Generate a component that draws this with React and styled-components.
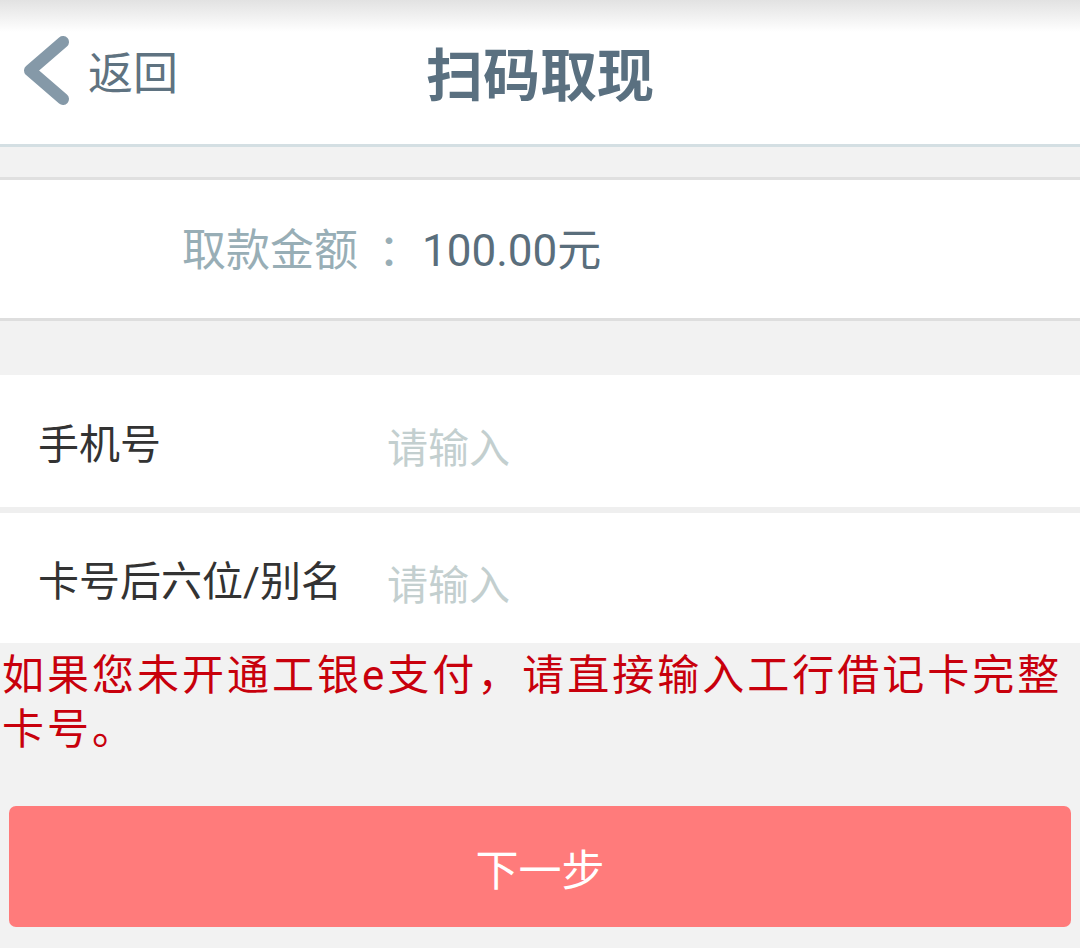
import styled, { createGlobalStyle } from 'styled-components';

const GlobalStyle = createGlobalStyle`
  html, body {
    margin: 0;
    padding: 0;
    background: #f2f2f2;
    font-family: Roboto, "Noto Sans CJK SC", sans-serif;
  }
  * { box-sizing: border-box; }
`;

const Page = styled.div`
  width: 1080px;
  min-height: 948px;
  background: #f2f2f2;
`;

const Header = styled.header`
  height: 147px;
  display: grid;
  grid-template-columns: 1fr auto 1fr;
  align-items: center;
  padding-bottom: 3px;
  background: linear-gradient(#e2e2e2 0, #ffffff 32px, #ffffff 100%);
  border-bottom: 3px solid #d4dfe3;
`;

const Back = styled.div`
  display: flex;
  align-items: center;
  gap: 16px;
  padding-left: 22px;
  color: #5f7381;
  font-size: 45px;
`;

const Title = styled.h1`
  margin: 0;
  font-size: 57px;
  font-weight: 700;
  color: #5a7080;
`;

const Gap = styled.div`
  height: ${(props) => props.h}px;
`;

const AmountBox = styled.section`
  height: 144px;
  background: #fff;
  border-top: 3px solid #e0e0e0;
  border-bottom: 3px solid #dedede;
  display: flex;
  align-items: center;
  padding: 0 0 4px 182px;
  font-size: 44px;
`;

const AmountLabel = styled.span`
  color: #98aeb6;
`;

const Colon = styled.span`
  color: #98aeb6;
  margin-left: 20px;
`;

const AmountValue = styled.span`
  color: #5a6e7c;
`;

const Row = styled.div`
  height: ${(props) => props.h}px;
  background: #fff;
  display: flex;
  align-items: center;
  font-size: 41px;
`;

const Label = styled.span`
  width: 387px;
  padding-left: 38px;
  color: #333;
`;

const Input = styled.input`
  flex: 1;
  border: none;
  outline: none;
  background: transparent;
  font: inherit;
  padding: 0;
  margin-top: 16px;
  color: #333;
  &::placeholder {
    color: #c3cfcf;
  }
`;

const Divider = styled.div`
  height: 6px;
  background: #efefef;
`;

const Notice = styled.p`
  margin: 0;
  padding: 6px 0 0 2px;
  font-size: 42px;
  line-height: 54px;
  letter-spacing: 3px;
  color: #c8000c;
`;

const NextButton = styled.button`
  display: block;
  width: 1062px;
  height: 121px;
  margin: 49px 0 0 9px;
  border: none;
  border-radius: 7px;
  background: #ff7b7b;
  color: #fff;
  font-family: inherit;
  font-size: 43px;
`;

const App = () => {
  return (
    <Page>
      <GlobalStyle />
      <Header>
        <Back>
          <svg width="50" height="72" viewBox="0 0 50 72">
            <polyline
              points="41,7 8,35.5 41,64"
              fill="none"
              stroke="#8599a8"
              strokeWidth="12"
              strokeLinecap="round"
              strokeLinejoin="round"
            />
          </svg>
          <span>返回</span>
        </Back>
        <Title>扫码取现</Title>
        <div />
      </Header>
      <Gap h={30} />
      <AmountBox>
        <AmountLabel>取款金额</AmountLabel>
        <Colon>：</Colon>
        <AmountValue>100.00元</AmountValue>
      </AmountBox>
      <Gap h={54} />
      <Row h={132}>
        <Label>手机号</Label>
        <Input placeholder="请输入" />
      </Row>
      <Divider />
      <Row h={130}>
        <Label>卡号后六位/别名</Label>
        <Input placeholder="请输入" />
      </Row>
      <Notice>如果您未开通工银e支付，请直接输入工行借记卡完整卡号。</Notice>
      <NextButton>下一步</NextButton>
    </Page>
  );
};

export default App;
